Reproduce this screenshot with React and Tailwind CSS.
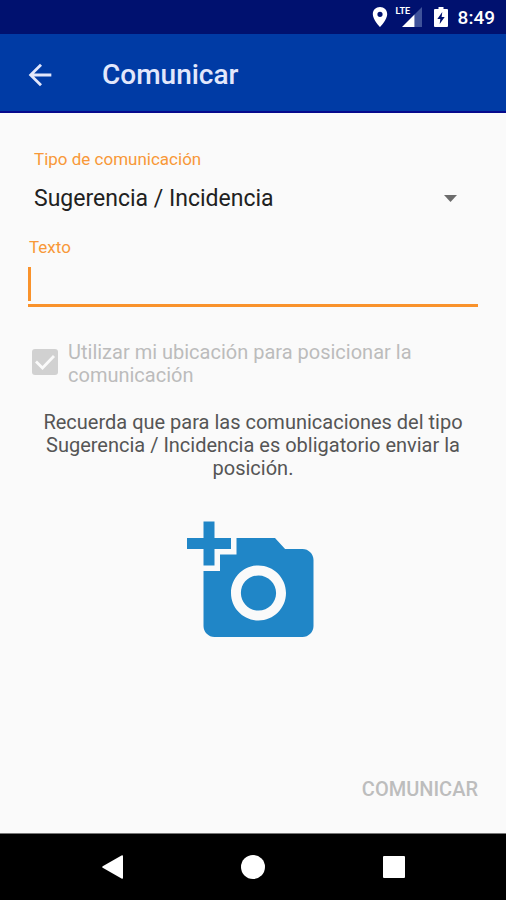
import { useState } from "react";

function StatusBar() {
  return (
    <div className="flex h-[34px] items-center justify-end bg-[#00116f] pr-[11px] text-white">
      <svg className="mr-2 h-[20px] w-[16px]" viewBox="0 0 16 20" fill="currentColor" aria-hidden="true">
        <path
          fillRule="evenodd"
          d="M8 0C3.900 0 .8 3.100.8 7.200.8 12.500 8 20 8 20s7.200-7.500 7.200-12.800C15.200 3.100 12.100 0 8 0zm0 4.700a2.600 2.600 0 1 1 0 5.200 2.600 2.600 0 0 1 0-5.200z"
        />
      </svg>
      <div className="relative mr-3 h-[20px] w-[26px]">
        <svg className="h-full w-full" viewBox="0 0 26 20" aria-hidden="true">
          <path d="M18.500 7.500 26 0v20h-7.500z" fill="#3f529a" />
          <path d="M6 20 18.500 7.500V20z" fill="white" />
        </svg>
        <span className="absolute top-0 left-0 text-[9px] leading-[9px] font-bold">LTE</span>
      </div>
      <svg className="mr-[10px] h-[20px] w-[14px]" viewBox="0 0 14 20" aria-hidden="true">
        <path d="M4.500 0h5v2H13a1 1 0 0 1 1 1v16a1 1 0 0 1-1 1H1a1 1 0 0 1-1-1V3a1 1 0 0 1 1-1h3.500z" fill="white" />
        <path d="M8.300 5 3.300 12h3L5.700 17l5-7H7.600z" fill="#00116f" />
      </svg>
      <span className="pt-px text-[19px] leading-[22px] font-medium">8:49</span>
    </div>
  );
}

function AppBar() {
  return (
    <header className="flex h-[79px] items-center border-b-2 border-[#060a8c] bg-[#003ba5] pt-1 pl-[22px] text-[#e2e7fb]">
      <button type="button" aria-label="Volver" className="flex size-9 items-center justify-center">
        <svg className="size-[34px]" viewBox="0 0 24 24" fill="currentColor" aria-hidden="true">
          <path d="M20 11H7.830l5.590-5.590L12 4l-8 8 8 8 1.410-1.410L7.830 13H20v-2z" />
        </svg>
      </button>
      <h1 className="ml-11 text-[28px] leading-9 font-medium">Comunicar</h1>
    </header>
  );
}

function NavigationBar() {
  return (
    <nav className="flex h-[67px] items-center justify-center gap-[117px] border-t border-[#777777] bg-black text-white">
      <button type="button" aria-label="Atrás" className="flex size-6 items-center justify-center">
        <svg className="size-6" viewBox="0 0 24 24" fill="currentColor" aria-hidden="true">
          <path d="M2.700 11.200 21.500.4q1.500-.7 1.500.8v21.600q0 1.500-1.500.8L2.700 12.800q-1-.8 0-1.600z" />
        </svg>
      </button>
      <button type="button" aria-label="Inicio" className="size-6 rounded-full bg-white" />
      <button type="button" aria-label="Recientes" className="flex size-6 items-center justify-center">
        <span className="size-[22px] rounded-[1px] bg-white" />
      </button>
    </nav>
  );
}

export default function App() {
  const [text, setText] = useState("");

  return (
    <div className="flex min-h-screen flex-col bg-[#fafafa] font-[Roboto,sans-serif]">
      <StatusBar />
      <AppBar />
      <main className="flex flex-1 flex-col px-7 pt-9">
        <label htmlFor="tipo" className="pl-[6px] text-[17px] leading-5 text-[#f89838]">
          Tipo de comunicación
        </label>
        <div className="relative mt-4 flex items-center">
          <select id="tipo" className="h-[28px] w-full appearance-none bg-transparent pl-[6px] text-[23px] leading-7 text-[#212121] outline-none">
            <option>Sugerencia / Incidencia</option>
          </select>
          <svg className="pointer-events-none absolute right-[21px] h-[8px] w-[13px]" viewBox="0 0 13 8" fill="#6c6c6c" aria-hidden="true">
            <path d="M0 0h13L6.500 7z" />
          </svg>
        </div>
        <label htmlFor="texto" className="mt-6 pl-px text-[17px] leading-5 text-[#f89838]">
          Texto
        </label>
        <div className="relative mt-2">
          <input
            id="texto"
            type="text"
            value={text}
            onChange={(event) => setText(event.target.value)}
            className="block h-[42px] w-full border-b-3 border-[#f9922b] bg-transparent px-1 text-[23px] caret-[#f9922b] outline-none"
          />
          {text === "" && <span className="pointer-events-none absolute top-[2px] left-0 h-[34px] w-[3px] bg-[#f9922b]" />}
        </div>
        <div className="mt-[34px] flex items-start gap-[10px] pl-1">
          <span className="relative mt-2 size-[26px] shrink-0">
            <input id="ubicacion" type="checkbox" checked disabled readOnly className="block size-[26px] appearance-none rounded-[3px] bg-[#d1d1d1]" />
            <svg className="pointer-events-none absolute inset-0 size-[26px]" viewBox="0 0 26 26" fill="none" stroke="#fafafa" strokeWidth="2.800" aria-hidden="true">
              <path d="m4 12.500 6.500 6.500L22 7" />
            </svg>
          </span>
          <label htmlFor="ubicacion" className="text-[20px] leading-[23px] text-[#bcbcbc]">
            Utilizar mi ubicación para posicionar la comunicación
          </label>
        </div>
        <p className="mt-6 px-3 text-center text-[20px] leading-[23px] text-[#555555]">
          Recuerda que para las comunicaciones del tipo Sugerencia / Incidencia es obligatorio enviar la posición.
        </p>
        <button type="button" aria-label="Añadir foto" className="mt-9 self-center text-[#2086c7]">
          <svg className="size-[132px]" viewBox="0 0 24 24" fill="currentColor" aria-hidden="true">
            <path d="M3 4V1h2v3h3v2H5v3H3V6H0V4h3zm3 6V7h3V4h7l1.830 2H21c1.100 0 2 .9 2 2v12c0 1.100-.9 2-2 2H5c-1.100 0-2-.9-2-2V10h3zm7 9c2.760 0 5-2.240 5-5s-2.240-5-5-5-5 2.240-5 5 2.240 5 5 5zm-3.200-5c0 1.770 1.430 3.200 3.200 3.200s3.200-1.430 3.200-3.200-1.430-3.200-3.200-3.200-3.200 1.430-3.200 3.200z" />
          </svg>
        </button>
        <button type="button" disabled className="mt-auto mb-8 self-end text-[20px] leading-6 font-medium text-[#bdbdbd]">
          COMUNICAR
        </button>
      </main>
      <NavigationBar />
    </div>
  );
}
